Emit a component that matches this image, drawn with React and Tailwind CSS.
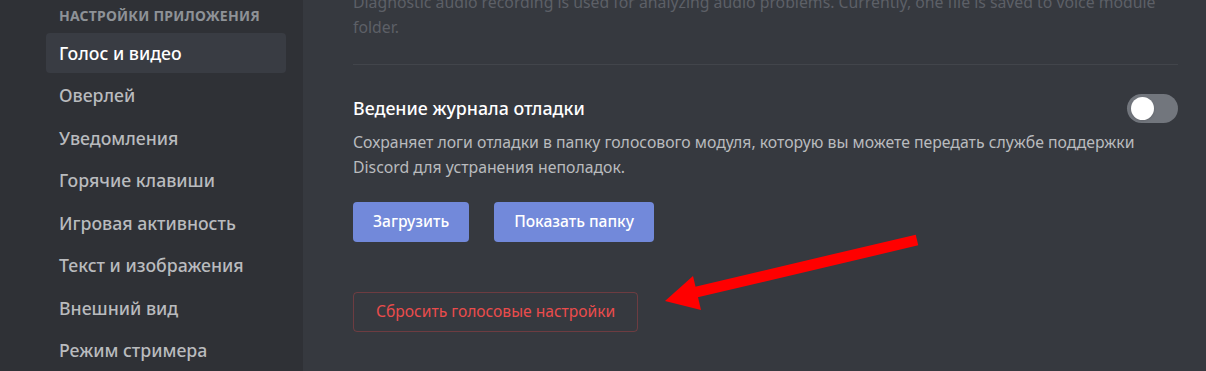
import React from 'react';

const navItems = [
    "Голос и видео",
    "Оверлей",
    "Уведомления",
    "Горячие клавиши",
    "Игровая активность",
    "Текст и изображения",
    "Внешний вид",
    "Режим стримера",
];

export default function App() {
    return (
        <div className="relative flex w-[1206px] h-[371px] overflow-hidden bg-[#36393f] font-['Noto_Sans',sans-serif]">
            <Sidebar active="Голос и видео" />
            <VoiceSettings />

            {/* annotation arrow drawn over the screenshot */}
            <svg className="absolute inset-0 pointer-events-none" width="1206" height="371">
                <line x1="917" y1="240" x2="688" y2="294" stroke="#ff0000" strokeWidth="11" />
                <polygon points="665,301 693,276 701,310" fill="#ff0000" />
            </svg>
        </div>
    );
}

function Sidebar({ active }) {
    return (
        <div className="w-[303px] shrink-0 h-full bg-[#2f3136] pt-[6px] pl-[46px] pr-[17px]">
            <div className="h-[20px] leading-[20px] pl-[13px] mb-[7px] text-[14px] font-bold uppercase text-[#8e9297] tracking-[0.2px]">
                Настройки приложения
            </div>
            <div className="flex flex-col gap-[2.5px]">
                {navItems.map(item => (
                    <div
                        key={item}
                        className={`h-[40px] px-[13px] flex items-center rounded-[4px] text-[17.7px] font-medium ${item === active
                            ? "bg-[#393c43] text-white"
                            : "text-[#b9bbbe]"
                            }`}
                    >
                        {item}
                    </div>
                ))}
            </div>
        </div>
    );
}

function VoiceSettings() {
    return (
        <div className="flex-1 pl-[50px] pr-[28px]">
            <div className="-mt-[10px] text-[15.8px] leading-[25px] text-[#5d6067]">
                Diagnostic audio recording is used for analyzing audio problems. Currently, one file is saved to voice module folder.
            </div>

            <div className="h-px bg-[#42454b] mt-[24px]" />

            <div className="mt-[28px] flex items-center justify-between h-[30px]">
                <div className="text-[17.8px] font-medium text-white">Ведение журнала отладки</div>
                <div className="w-[51px] h-[29px] rounded-full bg-[#72767d] flex items-center pl-[4px]">
                    <div className="w-[23px] h-[23px] rounded-full bg-white shadow" />
                </div>
            </div>

            <div className="mt-[7px] text-[15.8px] leading-[25px] text-[#b9bbbe]">
                Сохраняет логи отладки в папку голосового модуля, которую вы можете передать службе поддержки Discord для устранения неполадок.
            </div>

            <div className="mt-[22px] flex gap-[25px]">
                <button className="h-[40px] px-[20px] rounded-[4px] bg-[#7289da] text-white text-[15.6px] font-medium">
                    Загрузить
                </button>
                <button className="h-[40px] px-[20px] rounded-[4px] bg-[#7289da] text-white text-[15.6px] font-medium">
                    Показать папку
                </button>
            </div>

            <button className="mt-[50px] h-[40px] px-[22px] rounded-[4px] border border-[#f04747]/30 text-[#ea4c4c] text-[15.6px] font-normal">
                Сбросить голосовые настройки
            </button>
        </div>
    );
}
